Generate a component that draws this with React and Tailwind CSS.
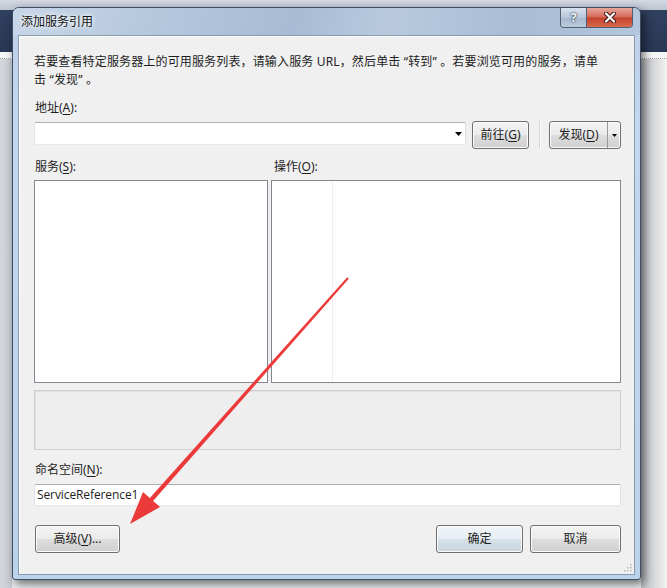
import React from "react";

const btnBg =
  "bg-[linear-gradient(to_bottom,#f3f3f3_0%,#ebebeb_48%,#dddddd_52%,#d0d0d0_100%)]";

const Btn = ({ children, className = "", bg = btnBg }) => (
  <div
    className={`flex items-center justify-center rounded-[3px] border border-[#707070] ${bg} shadow-[inset_0_0_0_1px_#fbfbfb] text-[12px] text-[#1e1e1e] ${className}`}
  >
    {children}
  </div>
);

const U = ({ children }) => <span className="underline underline-offset-2">{children}</span>;

const Arrow = () => (
  <svg className="absolute inset-0 pointer-events-none" width="667" height="588" viewBox="0 0 667 588">
    <polygon points="348.8,278.8 347.2,277.2 149.4,498.6 152.6,501.4" fill="#ec3a3a" />
    <polygon points="130,524 143,492 160,507" fill="#ec3a3a" />
  </svg>
);

const App = () => {
  return (
    <div className="relative w-[667px] h-[588px] overflow-hidden bg-[#eceef1] font-['Noto_Sans','Noto_Sans_CJK_SC',sans-serif]">
      {/* background: IDE behind the dialog */}
      <div className="flex flex-col h-full">
        <div className="h-[10px] bg-[linear-gradient(to_bottom,#d4d9e1,#bcc5d2)]" />
        <div className="h-[42px] bg-[linear-gradient(to_bottom,#30405f,#283754)]" />
        <div className="h-[7px] bg-[#f6f6f6] border-b border-dotted border-[#9aa0a8]" />
        <div className="flex-1 flex">
          <div className="w-[12px] bg-[linear-gradient(to_right,#d3d7dc,#c6ccd3)]" />
          <div className="flex-1" />
          <div className="w-[26px] bg-[linear-gradient(to_right,#b9bcc0,#f3f3f3)]" />
        </div>
      </div>

      {/* dialog window */}
      <div className="absolute left-[12px] top-[7px] w-[629px] h-[573px] flex flex-col rounded-t-[7px] rounded-b-[3px] border border-[#3f4e63] bg-[linear-gradient(to_bottom,#bccfe6,#c3d7ee_20%,#bcd3ec)] shadow-[3px_4px_10px_rgba(0,0,0,0.55)]">
        {/* title bar */}
        <div className="relative h-[27px] flex items-start rounded-t-[6px] bg-[linear-gradient(105deg,#c7d6e8_0%,#b0c3da_30%,#a7bbd4_45%,#b9cadf_60%,#a8bcd4_80%,#b3c6dc_100%)]">
          <span className="mt-[6px] ml-[8px] text-[12px] leading-[16px] text-[#111] [text-shadow:0_0_6px_#ffffff,0_0_3px_#ffffff]">
            添加服务引用
          </span>
          <div className="ml-auto mr-[7px] flex h-[20px] overflow-hidden rounded-b-[4px] border border-t-0 border-[#4e5f76]">
            <div className="w-[26px] flex items-center justify-center border-r border-[#4e5f76] bg-[linear-gradient(to_bottom,#d8e2ee,#b7c7da_50%,#a6b8ce_52%,#bccbdd)]">
              <span className="text-[13px] font-bold leading-none text-[#f4f6f8] [text-shadow:0_0_2px_#24303f,0_0_1px_#24303f]">?</span>
            </div>
            <div className="w-[45px] flex items-center justify-center bg-[linear-gradient(to_bottom,#e7a69b,#d46a58_48%,#c4402c_52%,#d76a4e)]">
              <svg width="12" height="11" viewBox="0 0 12 11">
                <path d="M2 1.5 L10 9.5 M10 1.5 L2 9.5" stroke="#3b1410" strokeWidth="4" strokeLinecap="round" />
                <path d="M2 1.5 L10 9.5 M10 1.5 L2 9.5" stroke="#ffffff" strokeWidth="2.2" strokeLinecap="round" />
              </svg>
            </div>
          </div>
        </div>

        {/* client area */}
        <div className="relative mx-[5px] h-[540px] border border-[#8a9bb0] bg-[#f0f0f0] shadow-[inset_1px_1px_0_#ffffff] pl-[15px] pr-[13px] pt-[17px] text-[12px] leading-[18px] text-[#1e1e1e] flex flex-col">
          <p className="whitespace-nowrap tracking-[0.15px]">
            若要查看特定服务器上的可用服务列表，请输入服务 URL，然后单击 “转到” 。若要浏览可用的服务，请单
            <br />
            击 “发现” 。
          </p>

          <div className="mt-[10px] pl-[1px]">
            地址(<U>A</U>):
          </div>
          <div className="mt-[4px] flex items-start">
            <div className="mt-[1px] w-[432px] h-[23px] flex items-center justify-end bg-white border border-[#abadb3] border-l-[#e2e3ea] border-r-[#dbdfe6] border-b-[#e3e9ef] rounded-[2px] pr-[3px]">
              <svg width="7" height="4" viewBox="0 0 7 4">
                <path d="M0 0 H7 L3.5 4 Z" fill="#000" />
              </svg>
            </div>
            <Btn className="ml-[6px] w-[57px] h-[28px]">
              前往(<U>G</U>)
            </Btn>
            <div className="ml-[10px] w-[2px] h-[27px] border-l border-[#d5d5d5] border-r border-r-white" />
            <div className={`ml-[8px] flex h-[28px] w-[72px] rounded-[3px] border border-[#707070] ${btnBg} shadow-[inset_0_0_0_1px_#fbfbfb]`}>
              <div className="flex-1 flex items-center justify-center">
                发现(<U>D</U>)
              </div>
              <div className="w-[13px] flex items-center justify-center border-l border-[#9a9a9a]">
                <svg width="5" height="3" viewBox="0 0 5 3">
                  <path d="M0 0 H5 L2.5 3 Z" fill="#000" />
                </svg>
              </div>
            </div>
          </div>

          <div className="mt-[9px] flex">
            <div className="w-[237px] pl-[1px]">
              服务(<U>S</U>):
            </div>
            <div className="pl-[3px]">
              操作(<U>O</U>):
            </div>
          </div>
          <div className="mt-[4px] flex gap-[3px] h-[203px]">
            <div className="w-[234px] bg-white border border-[#828790]" />
            <div className="flex-1 bg-white border border-[#828790] pl-[60px]">
              <div className="w-px h-full bg-[#f0edf0]" />
            </div>
          </div>

          <div className="mt-[7px] h-[60px] bg-[#eeeeee] border border-[#cfcfcf] shadow-[inset_1px_1px_0_#e2e2e2]" />

          <div className="mt-[11px] pl-[1px]">
            命名空间(<U>N</U>):
          </div>
          <div className="mt-[5px] h-[22px] flex items-center bg-white border border-[#abadb3] border-l-[#e2e3ea] border-r-[#dbdfe6] border-b-[#e3e9ef] rounded-[2px] pl-[2px] text-[12px] tracking-[-0.1px] font-['Open_Sans','Noto_Sans',sans-serif]">
            ServiceReference1
          </div>

          <div className="mt-[19px] flex items-center">
            <Btn className="ml-[1px] w-[85px] h-[28px]">
              高级(<U>V</U>)...
            </Btn>
            <Btn
              className="ml-auto w-[87px] h-[28px] border-[#3c7fb1] shadow-[inset_0_0_0_1px_#a8e4f8,inset_0_0_0_2px_#e2f4fb]"
              bg="bg-[linear-gradient(to_bottom,#f0f5f8_0%,#e6eef3_48%,#d6e1e8_52%,#c9d6de_100%)]"
            >
              确定
            </Btn>
            <Btn className="ml-[7px] w-[91px] h-[28px]">取消</Btn>
          </div>

          {/* resize grip */}
          <svg className="absolute right-[2px] bottom-[2px]" width="10" height="10" viewBox="0 0 10 10">
            {[[8, 2], [8, 5], [5, 5], [8, 8], [5, 8], [2, 8]].map(([x, y], i) => (
              <rect key={i} x={x} y={y} width="1.5" height="1.5" fill="#b8b8b8" />
            ))}
          </svg>
        </div>
      </div>

      <Arrow />
    </div>
  );
};

export default App;
